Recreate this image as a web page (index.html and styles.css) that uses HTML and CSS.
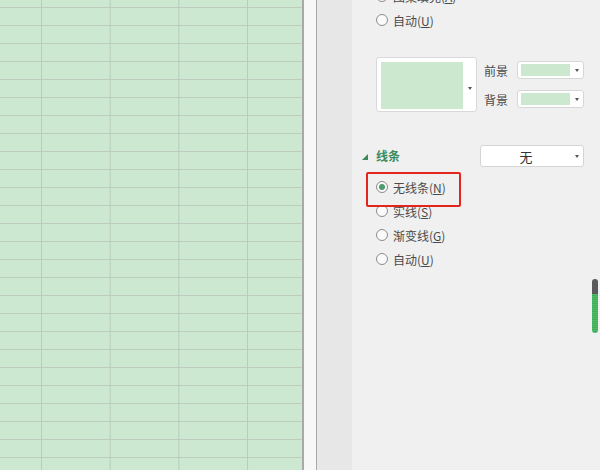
FILE: index.html
```html
<!DOCTYPE html>
<html lang="zh-CN">
<head>
<meta charset="utf-8">
<title>线条设置</title>
<link rel="stylesheet" href="styles.css">
</head>
<body>
<div class="page">
  <div class="sheet"></div>
  <div class="splitter"></div>
  <div class="gutter"></div>
  <div class="panel">
    <div class="radio-list">
      <label class="radio"><span class="circle"></span><span>图案填充(<u>A</u>)</span></label>
      <label class="radio"><span class="circle"></span><span>自动(<u>U</u>)</span></label>
    </div>

    <div class="color-row">
      <div class="swatch-btn">
        <span class="swatch-big"></span>
        <span class="caret"></span>
      </div>
      <div class="fgbg">
        <div class="fg-row">
          <span class="fg-label">前景</span>
          <div class="mini-dd"><span class="mini-swatch"></span><span class="caret"></span></div>
        </div>
        <div class="fg-row">
          <span class="fg-label">背景</span>
          <div class="mini-dd"><span class="mini-swatch"></span><span class="caret"></span></div>
        </div>
      </div>
    </div>

    <div class="section-head">
      <svg class="tri" width="6" height="6" viewBox="0 0 6 6"><polygon points="6,0 6,6 0,6" fill="#3b8a5c"/></svg>
      <span class="section-title">线条</span>
      <div class="dd"><span class="dd-text">无</span><span class="caret"></span></div>
    </div>

    <div class="radio-list lines">
      <label class="radio"><span class="circle checked"></span><span>无线条(<u>N</u>)</span></label>
      <label class="radio"><span class="circle"></span><span>实线(<u>S</u>)</span></label>
      <label class="radio"><span class="circle"></span><span>渐变线(<u>G</u>)</span></label>
      <label class="radio"><span class="circle"></span><span>自动(<u>U</u>)</span></label>
      <div class="highlight"></div>
    </div>
  </div>
  <div class="scrollbar"></div>
</div>
</body>
</html>
```

FILE: styles.css
```css
* { box-sizing: border-box; }

html, body {
  margin: 0;
  padding: 0;
  width: 600px;
  height: 470px;
  overflow: hidden;
  background: #f0f0f0;
  font-family: "Noto Sans CJK SC", "Noto Sans", sans-serif;
  font-size: 12px;
  color: #4a4a4a;
}

.page {
  position: relative;
  display: flex;
  width: 600px;
  height: 470px;
  overflow: hidden;
}

.sheet {
  width: 302px;
  flex: none;
  height: 100%;
  background-color: #cde8d0;
  background-image:
    linear-gradient(to right, #b9cbbc 1px, transparent 1px),
    linear-gradient(to bottom, #bccdbf 1px, transparent 1px);
  background-size: 68.7px 100%, 100% 18px;
  background-position: 41px 0, 0 7px;
}

.splitter {
  width: 15px;
  flex: none;
  background: #f7f7f7;
  border-left: 2px solid #a9a9a9;
  border-right: 1px solid #a8a8a8;
}

.gutter {
  width: 35px;
  flex: none;
  background: #e7e7e7;
}

.panel {
  flex: 1;
  margin-top: -16px;
  padding: 0 16px 0 24px;
  background: #f0f0f0;
}

.radio-list {
  display: flex;
  flex-direction: column;
}

.radio {
  display: flex;
  align-items: center;
  height: 24px;
  gap: 5px;
  white-space: nowrap;
}

.circle {
  width: 12px;
  height: 12px;
  flex: none;
  border: 1px solid #8c8c8c;
  border-radius: 50%;
  background: #fafafa;
  display: flex;
  align-items: center;
  justify-content: center;
}

.circle.checked::after {
  content: "";
  width: 6px;
  height: 6px;
  border-radius: 50%;
  background: #4e9a6c;
}

.color-row {
  display: flex;
  align-items: flex-start;
  margin-top: 25px;
  gap: 7px;
}

.swatch-btn {
  width: 101px;
  height: 55px;
  display: flex;
  align-items: flex-start;
  padding: 4px;
  background: #ffffff;
  border: 1px solid #d9d9d9;
  border-radius: 3px;
}

.swatch-big {
  width: 83px;
  height: 47px;
  background: #cce8cf;
}

.swatch-btn .caret {
  margin: 25px 0 0 5px;
}

.caret {
  width: 0;
  height: 0;
  flex: none;
  border-left: 2.5px solid transparent;
  border-right: 2.5px solid transparent;
  border-top: 3px solid #555;
}

.fgbg {
  margin-top: 4px;
  display: flex;
  flex-direction: column;
  gap: 11px;
}

.fg-row {
  display: flex;
  align-items: center;
  gap: 9px;
}

.fg-label {
  width: 24px;
  color: #4a4a4a;
}

.mini-dd {
  width: 67px;
  height: 18px;
  display: flex;
  align-items: center;
  padding: 0 4px 0 3px;
  gap: 5px;
  background: #ffffff;
  border: 1px solid #d6d6d6;
  border-radius: 3px;
}

.mini-swatch {
  width: 51px;
  height: 12px;
  background: #cce8cf;
}

.section-head {
  display: flex;
  align-items: center;
  margin-top: 33px;
  margin-left: -13px;
  height: 22px;
}

.tri {
  display: block;
  margin-top: 1px;
  margin-left: -1px;
}

.section-title {
  margin-left: 8px;
  margin-top: -2px;
  font-weight: bold;
  color: #3b8a5c;
}

.dd {
  margin-left: auto;
  width: 104px;
  height: 22px;
  display: flex;
  align-items: center;
  padding: 0 4px 0 0;
  background: #ffffff;
  border: 1px solid #d4d4d4;
  border-radius: 3px;
}

.dd-text {
  flex: 1;
  text-align: center;
  color: #333;
  font-size: 13px;
  padding-right: 4px;
}

.lines {
  position: relative;
  margin-top: 8px;
}

.highlight {
  position: absolute;
  left: -10px;
  top: -3px;
  width: 95px;
  height: 35px;
  border: 2px solid #e3261d;
  border-radius: 2px;
}

.scrollbar {
  position: absolute;
  left: 592px;
  top: 279px;
  width: 6px;
  height: 54px;
  border-radius: 3px;
  background:
    repeating-linear-gradient(to bottom, rgba(255,255,255,0.12) 0 1px, transparent 1px 2px) 0 15px / 100% 100% no-repeat,
    linear-gradient(to bottom, #5a5a5a 0 15px, #3daf58 15px 100%);
}
```
